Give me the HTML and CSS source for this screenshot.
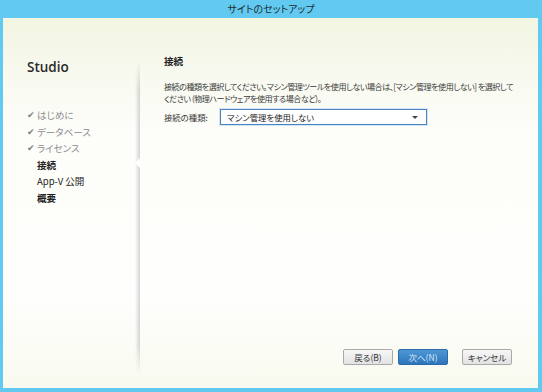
FILE: index.html
```html
<!DOCTYPE html>
<html lang="ja">
<head>
    <meta charset="UTF-8">
    <title>サイトのセットアップ</title>
    <link rel="stylesheet" href="styles.css">
</head>
<body>
    <div class="window">
        <div class="titlebar">サイトのセットアップ</div>
        <div class="frame">
            <div class="sidebar">
                <div class="product">Studio</div>
                <ul class="steps">
                    <li class="done"><span class="check">✔</span>はじめに</li>
                    <li class="done"><span class="check">✔</span>データベース</li>
                    <li class="done"><span class="check">✔</span>ライセンス</li>
                    <li class="current"><span class="check"></span>接続</li>
                    <li><span class="check"></span>App-V 公開</li>
                    <li class="strong"><span class="check"></span>概要</li>
                </ul>
            </div>
            <div class="main">
                <h2>接続</h2>
                <p class="desc">接続の種類を選択してください。マシン管理ツールを使用しない場合は、[マシン管理を使用しない] を選択して<br>ください (物理ハードウェアを使用する場合など)。</p>
                <div class="field">
                    <label>接続の種類:</label>
                    <div class="select">
                        <span>マシン管理を使用しない</span>
                        <svg width="6" height="3" viewBox="0 0 6 3"><path d="M0 0h6L3 3z" fill="#444"/></svg>
                    </div>
                </div>
                <div class="buttons">
                    <button class="btn">戻る(B)</button>
                    <button class="btn primary">次へ(N)</button>
                    <button class="btn cancel">キャンセル</button>
                </div>
            </div>
        </div>
    </div>
</body>
</html>
```

FILE: styles.css
```css
body {
    margin: 0;
    background-color: #62caf0;
    font-family: "Noto Sans CJK JP", "Noto Sans", sans-serif;
}
.window {
    display: flex;
    flex-direction: column;
    width: 542px;
    height: 392px;
}
.titlebar {
    height: 18px;
    line-height: 17px;
    text-align: center;
    font-size: 10px;
    color: #1e2a33;
    font-feature-settings: "palt";
}
.frame {
    flex: 1;
    display: flex;
    margin: 0 4px 4px 3px;
    background: linear-gradient(to bottom, #f1f5e1 0px, #f6f8ec 40px, #fdfdf9 110px, #fefefc 280px, #f8faef 370px);
}
.sidebar {
    width: 136px;
    flex: none;
}
.product {
    margin: 40px 0 0 24px;
    font-family: "Open Sans", "Noto Sans", sans-serif;
    font-weight: 600;
    font-size: 13.5px;
    color: #2a2a2a;
}
.steps {
    list-style: none;
    margin: 31px 0 0 24px;
    padding: 0;
    font-size: 9.5px;
    line-height: 16.6px;
    color: #222;
    font-feature-settings: "palt";
}
.steps li {
    display: flex;
}
.check {
    width: 10px;
    font-size: 9px;
    color: #7d8380;
}
.steps .done {
    color: #8c8c8c;
}
.steps .current,
.steps .strong {
    font-weight: bold;
}
.main {
    flex: 1;
    min-width: 0;
    position: relative;
    padding: 36px 20px 0 25px;
    display: flex;
    flex-direction: column;
}
.main::before {
    content: "";
    position: absolute;
    left: -4px;
    top: 42px;
    bottom: 14px;
    width: 5px;
    background: linear-gradient(to right, rgba(255,255,255,0), rgba(110,115,135,0.3));
    -webkit-mask-image: linear-gradient(to bottom, transparent, #000 30px, #000 calc(100% - 30px), transparent);
    mask-image: linear-gradient(to bottom, transparent, #000 30px, #000 calc(100% - 30px), transparent);
}
.main::after {
    content: "";
    position: absolute;
    left: -4px;
    top: 140px;
    border-style: solid;
    border-width: 5px 5px 5px 0;
    border-color: transparent #fff transparent transparent;
}
h2 {
    margin: 0;
    font-size: 9.5px;
    font-weight: bold;
    color: #222;
    line-height: 14px;
}
.desc {
    margin: 13px 0 0;
    font-size: 8.1px;
    line-height: 12px;
    letter-spacing: -0.5px;
    white-space: nowrap;
    color: #3a3a3a;
    font-feature-settings: "palt";
}
.field {
    display: flex;
    align-items: center;
    margin-top: 4px;
    font-size: 8.4px;
    color: #3a3a3a;
    font-feature-settings: "palt";
}
.field label {
    width: 56px;
}
.select {
    width: 191px;
    height: 14px;
    border: 1px solid #4a86bd;
    box-shadow: 0 0 0 1px #d3e5f4;
    background: #fff;
    display: flex;
    align-items: center;
    justify-content: space-between;
    padding: 0 8px 0 6px;
    color: #222;
}
.buttons {
    margin-top: auto;
    margin-bottom: 23px;
    display: flex;
    justify-content: flex-end;
    padding-right: 6px;
}
.btn {
    width: 50px;
    height: 16px;
    padding: 0;
    font-family: inherit;
    font-size: 8.5px;
    color: #333;
    border: 1px solid #a9a9a9;
    border-radius: 2px;
    background: linear-gradient(to bottom, #f7f7f7, #e2e2e2);
    font-feature-settings: "palt";
}
.btn.primary {
    margin-left: 5px;
    color: #d8e8f8;
    border-color: #2b6aa6;
    background: linear-gradient(to bottom, #4d97d6, #2c75bb);
}
.btn.cancel {
    margin-left: 14px;
}
```
